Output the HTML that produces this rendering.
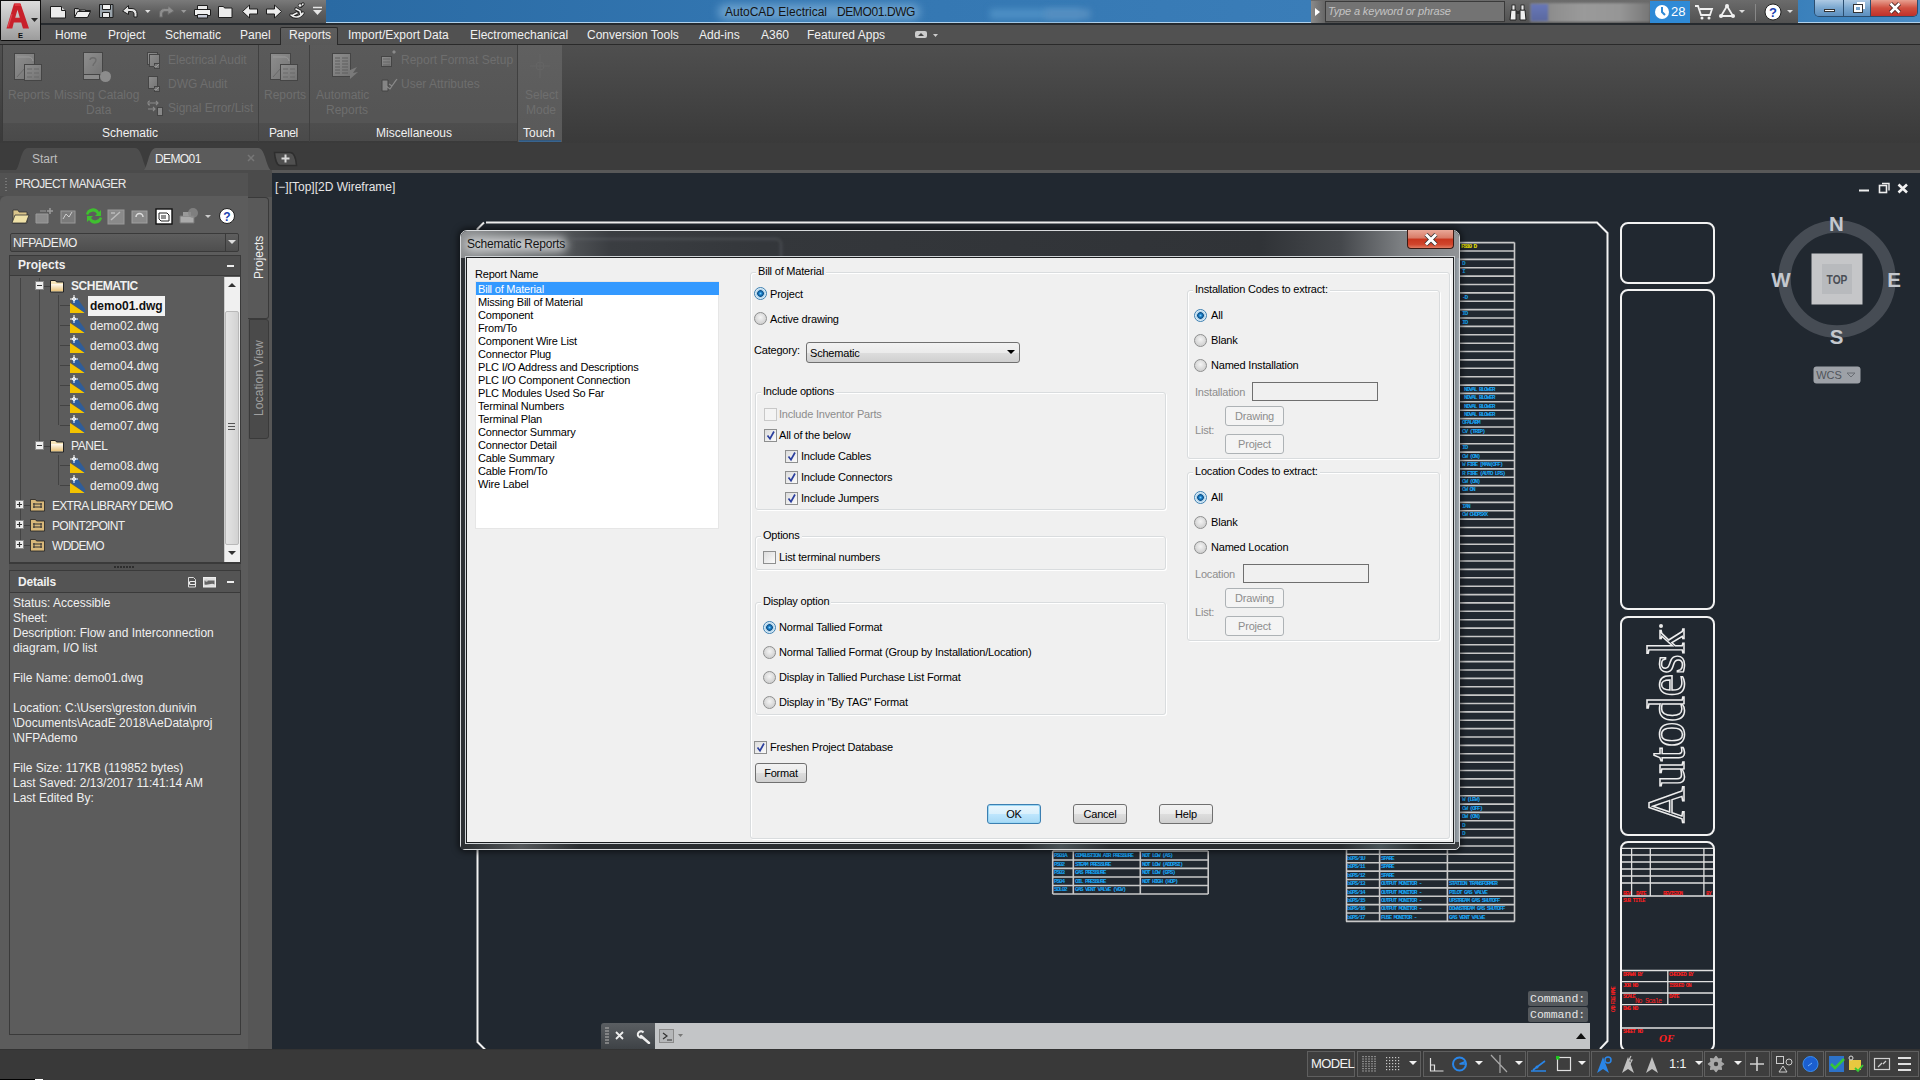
<!DOCTYPE html>
<html><head><meta charset="utf-8">
<style>
*{margin:0;padding:0;box-sizing:border-box}
html,body{width:1920px;height:1080px;overflow:hidden;background:#212830;font-family:"Liberation Sans",sans-serif}
.a{position:absolute}
.t{position:absolute;white-space:nowrap;line-height:1}
/* title */
#qat{left:0;top:0;width:326px;height:24px;background:linear-gradient(#7a7a7a,#5e5e5e 50%,#4e4e4e)}
#blue{left:326px;top:0;width:985px;height:23px;background:linear-gradient(90deg,#2a6aa3,#3275b0 40%,#3a7db8);border-bottom:1px solid #b0d0ea}
#srch{left:1311px;top:0;width:487px;height:24px;background:linear-gradient(#6b6b6b,#505050)}
#blue2{left:1798px;top:0;width:122px;height:23px;background:linear-gradient(90deg,#3a80bb,#4a8cc5);border-bottom:1px solid #b0d0ea}
#tabs{left:0;top:23px;width:1920px;height:22px;background:#515151;border-top:2px solid #262a2e;border-bottom:1px solid #2a2a2a}
#ribbon{left:0;top:45px;width:1920px;height:99px;background:linear-gradient(#4f4f4f,#3a3a3a);border-bottom:1px solid #747474}
#ftabs{left:0;top:143px;width:1920px;height:29px;background:#3c3c3c}
#leftbg{left:0;top:170px;width:272px;height:879px;background:#4b4b4b}
#status{left:0;top:1050px;width:1920px;height:30px;background:#393939}

.gb{position:absolute;border:1px solid #d9dcde;border-radius:3px;box-shadow:inset 1px 1px 0 #fff,1px 1px 0 #fff}
.gl{position:absolute;white-space:nowrap;line-height:1;background:#f0f0f0;padding:0 2px}
.rb{position:absolute;width:13px;height:13px;border-radius:50%;border:1px solid #8e8f8f;background:radial-gradient(circle at 50% 40%,#f4f4f4,#d2d2d2 70%,#e8e8e8)}
.rb.on{border-color:#3c7fb1;background:radial-gradient(circle at 50% 50%,#7fd0ff 0,#1a7fc8 1.5px,#0e4f86 3px,#9fc8e4 3.6px,#dcecf6 5px,#f2f8fc 6px)}
.cb{position:absolute;width:13px;height:13px;border:1px solid #8e8f8f;background:linear-gradient(135deg,#dcdcdc,#fbfbfb)}
.cb.dis{border-color:#c8c8c8;background:#f4f4f4}

.btn{position:absolute;border:1px solid #707070;border-radius:3px;background:linear-gradient(#f2f2f2,#ebebeb 50%,#dddddd 51%,#cfcfcf);text-align:center;line-height:18px;white-space:nowrap}
.btn.def{border-color:#3c7fb1;background:linear-gradient(#eaf6fd,#d9f0fc 50%,#bee6fd 51%,#a7d9f5);box-shadow:inset 0 0 0 1px #9ad7f5}
.btn.dis{border-color:#adb2b5;background:#f4f4f4;color:#8d8d8d}

.sbx{position:absolute;top:1051px;height:26px;border:1px solid #5f5f5f;background:#3e3e3e}
</style></head><body>
<!-- ===== TITLE BAR ===== -->
<div id="qat" class="a"></div>
<div id="blue" class="a"></div>
<div id="srch" class="a"></div>
<div id="blue2" class="a"></div>
<!-- app button -->
<div class="a" style="left:0;top:0;width:41px;height:41px;background:#0e0e0e;border-radius:0 0 2px 2px;z-index:5">
 <div class="a" style="left:1px;top:1px;width:39px;height:39px;background:linear-gradient(#dcdcdc,#bdbdbd 50%,#9c9c9c)"></div>
 <svg class="a" style="left:0;top:0" width="41" height="41" viewBox="0 0 41 41"><path fill-rule="evenodd" d="M6.5 28.5L14 3.5H20.5L29 28.5H23L21.2 22.5H13.8L12.3 28.5Z M15.2 17.8H19.8L17.5 9.8Z" fill="#c8202a"/><path d="M14.5 3.5H20L21 6H15z" fill="#e03840"/><path d="M8 27l4-13" stroke="#e8606a" stroke-width="1.2" opacity="0.6"/>
 <path d="M31 18h7l-3.5 4z" fill="#2a2a2a"/>
 <text x="20.5" y="37.5" font-size="7.5" font-weight="bold" text-anchor="middle" fill="#0a0a0a" font-family="Liberation Sans">E</text></svg>
</div>
<!-- QAT icons -->
<svg class="a" style="left:42px;top:0" width="288" height="24" viewBox="42 0 288 24">
 <g stroke="#1e1e1e" stroke-width="1" stroke-linejoin="round">
  <path d="M50.5 6.5h11l4 4v7.5h-15z" fill="#ececec"/><path d="M61.5 6.5v4h4" fill="#cfcfcf"/>
  <path d="M74.5 8.5v9h13l3-7h-11.5" fill="#d8d8d8"/><path d="M74.5 8.5h4l1 1.5h6v2" fill="#e6e6e6"/><path d="M77.5 11.5h13l-3 6h-13z" fill="#eeeeee"/>
  <path d="M99.5 4.5h13.5v13h-13.5z" fill="#9aa4ac"/><rect x="102.5" y="4.5" width="8" height="5" fill="#f2f2f2"/><rect x="102.5" y="12.5" width="7" height="5" fill="#eaeaea"/>
  <path d="M122.5 11l6-5.5v3h3.5c3 0 5 2 5 5v3.5h-3v-3c0-1.5-1-2.5-2.5-2.5h-3v3z" fill="#e4e4e4"/>
  <path d="M174 11l-6-5.5v3h-3.5c-3 0-5 2-5 5v3.5h3v-3c0-1.5 1-2.5 2.5-2.5h3v3z" fill="#8e8e8e" stroke="#6a6a6a"/>
  <path d="M197.5 5.5h10v4h-10z" fill="#e8e8e8"/><path d="M194.5 9.5h16v6h-16z" fill="#f0f0f0"/><path d="M197.5 14.5h10v3.5h-10z" fill="#c8ccd8"/>
  <path d="M218.5 6.5h5l1 1.5h7.5v9.5h-13.5z" fill="#ececec"/>
  <path d="M242.5 11.5l7-6.5v4h8v5h-8v4z" fill="#eeeeee"/>
  <path d="M281.5 11.5l-7-6.5v4h-8v5h8v4z" fill="#eeeeee"/>
 </g>
 <path d="M145 10h5.5l-2.75 3z" fill="#e0e0e0"/>
 <path d="M181 10h5.5l-2.75 3z" fill="#9a9a9a"/>
 <path d="M291 15c3 3 9 3 12-2M296 9l4 2 1 4M297 13l-4 2M301 6l2-2" stroke="#1e1e1e" stroke-width="3.2" fill="none" stroke-linecap="round"/>
 <path d="M291 15c3 3 9 3 12-2M296 9l4 2 1 4M297 13l-4 2M301 6l2-2" stroke="#f0f0f0" stroke-width="1.6" fill="none" stroke-linecap="round"/>
 <circle cx="300" cy="5.5" r="1.8" fill="#f0f0f0" stroke="#1e1e1e" stroke-width="0.8"/>
 <path d="M313 7.5h9" stroke="#e6e6e6" stroke-width="1.5"/><path d="M313 10h9l-4.5 5z" fill="#e6e6e6"/>
</svg>
<!-- title text -->
<div class="a" style="left:718px;top:4px;width:202px;height:16px;background:rgba(150,195,230,0.55);border-radius:8px;filter:blur(4px)"></div><div class="t" style="left:725px;top:6px;font-size:12px;color:#141414">AutoCAD Electrical</div><div class="t" style="left:837px;top:6px;font-size:12px;color:#141414;letter-spacing:-0.4px">DEMO01.DWG</div>
<div class="a" style="left:990px;top:9px;width:90px;height:10px;background:#4d8fc4;filter:blur(3px)"></div>
<div class="a" style="left:1045px;top:9px;width:45px;height:10px;background:#558ec0;filter:blur(3px)"></div>
<!-- search -->
<div class="a" style="left:1311px;top:1px;width:14px;height:22px;background:linear-gradient(90deg,#8a8a8a,#666)"></div>
<svg class="a" style="left:1315px;top:8px" width="6" height="8"><path d="M0 0L5 4L0 8Z" fill="#fff"/></svg>
<div class="a" style="left:1325px;top:1px;width:180px;height:21px;background:#737373;border:1px solid #3a3a3a"></div>
<div class="t" style="left:1328px;top:6px;font-size:11px;font-style:italic;color:#c4c4c4;letter-spacing:-0.15px">Type a keyword or phrase</div>
<svg class="a" style="left:1509px;top:4px" width="18" height="17" viewBox="0 0 18 17"><path d="M2 6h5v10H1z M11 6h5l1 10h-6z" fill="#f0f0f0" stroke="#222" stroke-width="1"/><rect x="3" y="1" width="3" height="5" fill="#eee" stroke="#222" stroke-width="0.8"/><rect x="12" y="1" width="3" height="5" fill="#eee" stroke="#222" stroke-width="0.8"/><rect x="7" y="7" width="4" height="3" fill="#333"/></svg>
<div class="a" style="left:1530px;top:3px;width:120px;height:19px;background:linear-gradient(90deg,#7b7b80,#8f8f8f 20%,#9a9a9a 45%,#969696 75%,#777 100%);filter:blur(1px)"></div>
<div class="a" style="left:1531px;top:4px;width:17px;height:17px;background:linear-gradient(#6878b8,#5a68a0);filter:blur(1.2px)"></div>
<div class="a" style="left:1650px;top:1px;width:40px;height:22px;background:#2f8ad6"></div>
<svg class="a" style="left:1654px;top:4px" width="16" height="16" viewBox="0 0 16 16"><circle cx="8" cy="8" r="7" fill="#fff"/><path d="M8 3v5l3 3" stroke="#2f8ad6" stroke-width="2" fill="none"/></svg>
<div class="t" style="left:1671px;top:5px;font-size:13px;color:#fff">28</div>
<svg class="a" style="left:1694px;top:4px" width="20" height="16" viewBox="0 0 20 16"><path d="M1 2h3l3 9h9l2-6H6" stroke="#f0f0f0" stroke-width="1.8" fill="none"/><circle cx="8" cy="14" r="1.5" fill="#f0f0f0"/><circle cx="15" cy="14" r="1.5" fill="#f0f0f0"/></svg>
<svg class="a" style="left:1718px;top:3px" width="18" height="16" viewBox="0 0 18 16"><path d="M9 3L3 13h12z" stroke="#f0f0f0" stroke-width="1.8" fill="none"/><circle cx="9" cy="3" r="2" fill="#f0f0f0"/><circle cx="3" cy="13" r="2" fill="#f0f0f0"/><circle cx="15" cy="13" r="2" fill="#f0f0f0"/></svg>
<svg class="a" style="left:1739px;top:10px" width="6" height="4"><path d="M0 0H6L3 3Z" fill="#ddd"/></svg>
<div class="a" style="left:1755px;top:4px;width:1px;height:17px;background:#888"></div>
<svg class="a" style="left:1764px;top:3px" width="18" height="18" viewBox="0 0 18 18"><circle cx="9" cy="9" r="8" fill="#fff" stroke="#222" stroke-width="1"/><text x="9" y="14" font-size="13" font-weight="bold" text-anchor="middle" fill="#1b3fb0" font-family="Liberation Sans">?</text></svg>
<svg class="a" style="left:1787px;top:10px" width="6" height="4"><path d="M0 0H6L3 3Z" fill="#ddd"/></svg>
<!-- window buttons -->
<div class="a" style="left:1814px;top:0;width:104px;height:17px;border:1px solid #2b4e70;border-top:none;border-radius:0 0 5px 5px;overflow:hidden">
 <div class="a" style="left:0;top:0;width:28px;height:16px;background:linear-gradient(#aecae4,#7aa7cf 50%,#5c8fbf)"></div>
 <div class="a" style="left:28px;top:0;width:1px;height:16px;background:#2b4e70"></div>
 <div class="a" style="left:29px;top:0;width:26px;height:16px;background:linear-gradient(#aecae4,#7aa7cf 50%,#5c8fbf)"></div>
 <div class="a" style="left:55px;top:0;width:1px;height:16px;background:#2b4e70"></div>
 <div class="a" style="left:56px;top:0;width:48px;height:16px;background:linear-gradient(#e8a090,#d05040 50%,#c0302a)"></div>
 <div class="a" style="left:9px;top:9px;width:11px;height:3px;background:#fff;border:1px solid #333"></div>
 <div class="a" style="left:39px;top:5px;width:8px;height:7px;border:2px solid #fff;outline:1px solid #333"></div>
 <div class="a" style="left:42px;top:2px;width:8px;height:7px;border:2px solid #fff;border-left:none;border-bottom:none"></div>
 <svg class="a" style="left:73px;top:2px" width="14" height="12" viewBox="0 0 14 12"><path d="M2.5 1.5L11.5 10.5M11.5 1.5L2.5 10.5" stroke="#3a1a1a" stroke-width="4.2"/><path d="M2.5 1.5L11.5 10.5M11.5 1.5L2.5 10.5" stroke="#fff" stroke-width="2.6"/></svg>
</div>

<!-- ===== RIBBON TABS ===== -->
<div id="tabs" class="a"></div>
<div class="a" style="left:280px;top:27px;width:58px;height:19px;background:linear-gradient(#5e5e5e,#585858);border:1px solid #2a2a2a;border-bottom:none;border-radius:2px 2px 0 0"></div>
<div id="tabtxt" style="color:#f0f0f0;font-size:12px">
 <div class="t" style="left:55px;top:29px">Home</div>
 <div class="t" style="left:108px;top:29px">Project</div>
 <div class="t" style="left:165px;top:29px">Schematic</div>
 <div class="t" style="left:240px;top:29px">Panel</div>
 <div class="t" style="left:289px;top:29px">Reports</div>
 <div class="t" style="left:348px;top:29px">Import/Export Data</div>
 <div class="t" style="left:470px;top:29px">Electromechanical</div>
 <div class="t" style="left:587px;top:29px">Conversion Tools</div>
 <div class="t" style="left:699px;top:29px">Add-ins</div>
 <div class="t" style="left:761px;top:29px">A360</div>
 <div class="t" style="left:807px;top:29px">Featured Apps</div>
</div>
<svg class="a" style="left:914px;top:30px" width="26" height="10" viewBox="0 0 26 10"><rect x="1" y="1" width="12" height="7" rx="2" fill="#ccc"/><path d="M4 6l3-3 3 3z" fill="#444"/><path d="M19 4h5l-2.5 3z" fill="#ccc"/></svg>

<!-- ===== RIBBON ===== -->
<div id="ribbon" class="a"></div>
<div class="a" style="left:2px;top:45px;width:560px;height:97px;background:linear-gradient(#5a5a5a,#555 70%);border:1px solid #3a3a3a;border-top:none"></div>
<div class="a" style="left:3px;top:123px;width:558px;height:18px;background:linear-gradient(#4e4e4e,#4a4a4a)"></div>
<div class="a" style="left:258px;top:45px;width:1px;height:97px;background:#404040"></div>
<div class="a" style="left:309px;top:45px;width:1px;height:97px;background:#404040"></div>
<div class="a" style="left:517px;top:45px;width:1px;height:97px;background:#404040"></div>
<div class="a" style="left:518px;top:45px;width:44px;height:97px;background:linear-gradient(#606060,#595959)"></div>
<div class="a" style="left:519px;top:140px;width:42px;height:2px;background:linear-gradient(#2f5375,#3d6a96)"></div>
<div style="color:#6e6e6e;font-size:12px">
 <div class="t" style="left:8px;top:89px">Reports</div>
 <div class="t" style="left:54px;top:89px">Missing Catalog</div>
 <div class="t" style="left:86px;top:104px">Data</div>
 <div class="t" style="left:168px;top:54px">Electrical Audit</div>
 <div class="t" style="left:168px;top:78px">DWG Audit</div>
 <div class="t" style="left:168px;top:102px">Signal Error/List</div>
 <div class="t" style="left:264px;top:89px">Reports</div>
 <div class="t" style="left:316px;top:89px">Automatic</div>
 <div class="t" style="left:326px;top:104px">Reports</div>
 <div class="t" style="left:401px;top:54px">Report Format Setup</div>
 <div class="t" style="left:401px;top:78px">User Attributes</div>
 <div class="t" style="left:525px;top:89px">Select</div>
 <div class="t" style="left:526px;top:104px">Mode</div>
</div>
<div style="color:#f0f0f0;font-size:12px">
 <div class="t" style="left:102px;top:127px">Schematic</div>
 <div class="t" style="left:269px;top:127px;letter-spacing:-0.4px">Panel</div>
 <div class="t" style="left:376px;top:127px">Miscellaneous</div>
 <div class="t" style="left:523px;top:127px">Touch</div>
</div>
<svg class="a" style="left:0;top:0" width="562" height="125" viewBox="0 0 562 125">
 <defs><linearGradient id="ig" x1="0" y1="0" x2="1" y2="1"><stop offset="0" stop-color="#8e8e8e"/><stop offset="1" stop-color="#747474"/></linearGradient></defs>
 <g stroke="#454545" stroke-width="1">
  <g id="rep"><rect x="14.5" y="53.5" width="20" height="26" fill="url(#ig)"/><path d="M17 57h12c2 0 4 2 4 4" fill="none" stroke="#9a9a9a"/><path d="M17 77l8-9" stroke="#6a6a6a"/>
  <rect x="24.5" y="64.5" width="17" height="16" fill="url(#ig)"/><path d="M27 69h5M34 69h5M27 73h5M34 73h5M27 77h5M34 77h5" stroke="#6a6a6a"/></g>
  <use href="#rep" x="256"/>
  <rect x="83.5" y="52.5" width="19" height="22" fill="url(#ig)"/><rect x="83.5" y="74.5" width="16" height="5" fill="#8a8a8a"/><circle cx="105.5" cy="76.5" r="5.5" fill="#8c8c8c" stroke="none"/>
  <path d="M90 60c0-3 6-3 6 0s-3 3-3 6" fill="none" stroke="#6c6c6c" stroke-width="1.3"/>
  <rect x="147.5" y="52.5" width="10" height="12" fill="url(#ig)"/><rect x="149.5" y="54.5" width="10" height="12" fill="url(#ig)"/><rect x="154.5" y="63.5" width="5" height="5" fill="#777"/>
  <rect x="148.5" y="76.5" width="9" height="12" fill="url(#ig)"/><rect x="154.5" y="86.5" width="5" height="5" fill="#777"/>
  <rect x="157.5" y="107.5" width="5" height="8" fill="#888"/>
  <rect x="332.5" y="53.5" width="18" height="23" fill="url(#ig)"/><path d="M335 58h5M342 58h6M335 61h5M342 61h6M335 64h5M342 64h6M335 67h5M342 67h6M335 70h5M342 70h6M335 73h5M342 73h6" stroke="#5e5e5e"/>
  <rect x="381.5" y="56.5" width="10" height="10" fill="url(#ig)"/><path d="M383 59h7M383 62h7M383 65h7" stroke="#666"/>
  <path d="M382 80h6v11h-6z" fill="#858585"/>
 </g>
 <path d="M350 70l7-3-4 6 5-1-8 7z" fill="#7a7a7a"/>
 <path d="M392 52l2 2 2-2-2-2z" fill="#8a8a8a"/>
 <path d="M386 86l4 3 6-9M389 84l3 2 5-7" stroke="#8a8a8a" stroke-width="1.2" fill="none"/>
 <path d="M154 66l2 1 3-3M154 89l2 1 3-3" stroke="#9a9a9a" stroke-width="1" fill="none"/>
 <path d="M149 103h9m-2-2l2 2-2 2M150 101a2 2 0 0 0 0 4M148 109h7m-2-2l2 2-2 2" stroke="#8a8a8a" stroke-width="1.1" fill="none"/>
 <g stroke="#646464" stroke-width="1" fill="none"><path d="M540 54v24M530 66h20"/><circle cx="540" cy="66" r="4"/></g>
</svg>

<!-- ===== FILE TABS ===== -->
<div id="ftabs" class="a"></div>
<svg class="a" style="left:0;top:143px" width="320" height="29" viewBox="0 0 320 29">
 <path d="M14 28 C20 28 20 5 28 5 H135 C143 5 143 28 150 28 Z" fill="#4d4d4d"/>
 <path d="M142 28 C148 28 148 5 156 5 H258 C266 5 266 28 273 28 Z" fill="#5b5b5b"/>
 <path d="M274.5 9.5 H290 C294 9.5 296 16 296.5 22.5 H280 C277 22.5 275 16 274.5 9.5Z" fill="#505050" stroke="#2e2e2e" stroke-width="1.5"/>
 <path d="M285.5 11.5v8M281.5 15.5h8" stroke="#d8d8d8" stroke-width="2"/>
 <path d="M248 12l6 6M254 12l-6 6" stroke="#777" stroke-width="1.5"/>
</svg>
<div class="t" style="left:32px;top:153px;font-size:12px;color:#bdbdbd">Start</div>
<div class="t" style="left:155px;top:153px;font-size:12px;color:#f0f0f0;letter-spacing:-0.6px">DEMO01</div>
<div class="a" style="left:0;top:170px;width:1920px;height:3px;background:#585858"></div>

<!-- ===== LEFT PANEL ===== -->
<div id="leftbg" class="a"></div>
<div class="a" style="left:0;top:173px;width:248px;height:23px;background:#525252"></div>
<div class="a" style="left:5px;top:178px;width:2px;height:14px;background:repeating-linear-gradient(#777 0 1px,transparent 1px 3px)"></div>
<div class="t" style="left:15px;top:178px;font-size:12px;color:#eaeaea;letter-spacing:-0.6px">PROJECT MANAGER</div>
<div class="a" style="left:0;top:196px;width:248px;height:853px;background:#5c5c5c;border-radius:6px 0 0 0"></div>
<!-- toolbar -->
<svg class="a" style="left:10px;top:205px" width="230" height="22" viewBox="0 0 230 22">
 <path d="M3 5h5l1 2h8v11H3z" fill="#d9c48a" stroke="#333" stroke-width="0.8"/><path d="M5 10h14l-3 8H2z" fill="#f0e2a8" stroke="#333" stroke-width="0.8"/>
 <path d="M26 9h12v9H26z M30 6h6" fill="#8b8b8b" stroke="#9a9a9a" stroke-width="1"/><path d="M40 3v6M37 6h6" stroke="#9a9a9a" stroke-width="1.5"/>
 <rect x="51" y="6" width="14" height="12" fill="#7a7a7a" stroke="#999" stroke-width="1"/><path d="M53 14l3-5 3 3 3-5" stroke="#ccc" fill="none"/>
 <path d="M76 9a7 7 0 0 1 13-2l2-2v6h-6l2-2a5 5 0 0 0-9 1z M92 13a7 7 0 0 1-13 2l-2 2v-6h6l-2 2a5 5 0 0 0 9-1z" fill="#3fbf2f"/>
 <rect x="98" y="5" width="16" height="14" fill="#8a8a8a" stroke="#9a9a9a"/><path d="M101 15l9-8M101 8h4" stroke="#bbb" stroke-width="1.5"/>
 <rect x="122" y="6" width="15" height="12" fill="#8a8a8a" stroke="#a0a0a0"/><path d="M126 12a3.5 3.5 0 0 1 7 0" stroke="#ddd" fill="none" stroke-width="1.5"/>
 <rect x="146" y="4" width="16" height="15" fill="#fff" stroke="#111" stroke-width="1.4"/><path d="M149 8h8l2 2v6h-8l-2-2z" fill="none" stroke="#222"/><path d="M151 11h5M151 13h5" stroke="#222"/>
 <path d="M170 11h14v7h-14z" fill="#aaa" stroke="#777"/><rect x="173" y="7" width="8" height="4" fill="#999"/><circle cx="183" cy="8" r="5" fill="#888" opacity="0.8"/>
 <path d="M195 10h6l-3 3z" fill="#ccc"/>
 <circle cx="217" cy="11" r="7.5" fill="#fff" stroke="#222" stroke-width="1"/><text x="217" y="16" font-size="12" font-weight="bold" text-anchor="middle" fill="#1b3fb0" font-family="Liberation Sans">?</text>
</svg>
<!-- combo -->
<div class="a" style="left:10px;top:233px;width:229px;height:19px;background:linear-gradient(#5e5e5e,#4e4e4e);border:1px solid #3a3a3a;border-radius:2px"></div>
<div class="a" style="left:225px;top:234px;width:1px;height:17px;background:#3a3a3a"></div>
<svg class="a" style="left:228px;top:240px" width="8" height="5"><path d="M0 0H8L4 4Z" fill="#ddd"/></svg>
<div class="t" style="left:13px;top:237px;font-size:12px;color:#efefef;letter-spacing:-0.4px">NFPADEMO</div>
<!-- Projects header -->
<div class="a" style="left:9px;top:255px;width:232px;height:21px;background:#4e4e4e;border:1px solid #3a3a3a"></div>
<div class="t" style="left:18px;top:259px;font-size:12px;font-weight:bold;color:#f0f0f0">Projects</div>
<div class="a" style="left:227px;top:265px;width:7px;height:2px;background:#eee"></div>
<!-- tree -->
<div class="a" style="left:9px;top:276px;width:232px;height:288px;border-left:1px solid #3a3a3a;border-right:1px solid #3a3a3a;border-bottom:2px solid #3a3a3a"></div>
<svg class="a" style="left:9px;top:276px" width="215" height="286" viewBox="9 276 215 286">
 <g stroke="#2a2a2a" stroke-width="1" stroke-dasharray="1 1" fill="none" transform="translate(0.5 0.5)">
  <path d="M20 278V545M39 278V445M58 295V425M58 455V485M44 286h6M44 446h6M60 305h10M60 325h10M60 345h10M60 365h10M60 385h10M60 405h10M60 425h10M60 465h10M60 485h10M24 505h6M24 525h6M24 545h6"/>
 </g>
 <g fill="#eee" stroke="#888" stroke-width="1"><rect x="35.5" y="281.5" width="8" height="8"/><rect x="35.5" y="441.5" width="8" height="8"/><rect x="15.5" y="500.5" width="8" height="8"/><rect x="15.5" y="520.5" width="8" height="8"/><rect x="15.5" y="540.5" width="8" height="8"/></g>
 <g stroke="#333" stroke-width="1.2"><path d="M37 285.5h5M37 445.5h5M17 504.5h5M17 524.5h5M17 544.5h5M19.5 502v5M19.5 522v5M19.5 542v5"/></g>
 <g id="fold"><path d="M50.5 280.5h5l1 1.5h7v10h-13z" fill="#f6e4b8" stroke="#222" stroke-width="1"/><path d="M51 284h12v7H51z" fill="url(#fg)"/></g>
 <use href="#fold" y="160"/>
 <defs><linearGradient id="fg" x1="0" y1="0" x2="0" y2="1"><stop offset="0" stop-color="#fffaf0"/><stop offset="1" stop-color="#e8c27a"/></linearGradient>
 <g id="dwg"><path d="M70 313 L70 303 L85 313Z" fill="#f2c200"/><path d="M73 299 L77 298 L85 309 L85 313 L72 303Z" fill="#2f5d9a"/><path d="M70 299h8M74 295v8" stroke="#fff" stroke-width="1"/><circle cx="74" cy="299" r="1.5" fill="none" stroke="#fff"/></g>
 <g id="pfold"><path d="M30.5 499.5h5l1 1.5h8v10h-14z" fill="#d9b87a" stroke="#222" stroke-width="0.8"/><path d="M33 504h9M34 503v5M41 503v5M33 507h9" stroke="#333" stroke-width="1"/></g>
 </defs>
 <use href="#dwg"/><use href="#dwg" y="20"/><use href="#dwg" y="40"/><use href="#dwg" y="60"/><use href="#dwg" y="80"/><use href="#dwg" y="100"/><use href="#dwg" y="120"/><use href="#dwg" y="160"/><use href="#dwg" y="180"/>
 <use href="#pfold"/><use href="#pfold" y="20"/><use href="#pfold" y="40"/>
</svg>
<div class="a" style="left:88px;top:296px;width:77px;height:20px;background:#f2f2f2"></div>
<div style="font-size:12px;color:#f0f0f0">
 <div class="t" style="left:71px;top:280px;font-weight:bold;letter-spacing:-0.4px">SCHEMATIC</div>
 <div class="t" style="left:90px;top:300px;font-weight:bold;color:#111">demo01.dwg</div>
 <div class="t" style="left:90px;top:320px">demo02.dwg</div>
 <div class="t" style="left:90px;top:340px">demo03.dwg</div>
 <div class="t" style="left:90px;top:360px">demo04.dwg</div>
 <div class="t" style="left:90px;top:380px">demo05.dwg</div>
 <div class="t" style="left:90px;top:400px">demo06.dwg</div>
 <div class="t" style="left:90px;top:420px">demo07.dwg</div>
 <div class="t" style="left:71px;top:440px;letter-spacing:-0.4px">PANEL</div>
 <div class="t" style="left:90px;top:460px">demo08.dwg</div>
 <div class="t" style="left:90px;top:480px">demo09.dwg</div>
 <div class="t" style="left:52px;top:500px;letter-spacing:-0.7px">EXTRA LIBRARY DEMO</div>
 <div class="t" style="left:52px;top:520px;letter-spacing:-0.7px">POINT2POINT</div>
 <div class="t" style="left:52px;top:540px;letter-spacing:-0.7px">WDDEMO</div>
</div>
<!-- scrollbar -->
<div class="a" style="left:224px;top:277px;width:16px;height:285px;background:#f0f0f0;border-left:1px solid #ccc"></div>
<div class="a" style="left:225px;top:311px;width:14px;height:234px;background:linear-gradient(90deg,#e4e4e4,#d2d2d2);border:1px solid #b8b8b8;border-radius:2px"></div>
<svg class="a" style="left:227px;top:282px" width="10" height="6"><path d="M1 5L5 1L9 5Z" fill="#333"/></svg>
<svg class="a" style="left:227px;top:550px" width="10" height="6"><path d="M1 1L5 5L9 1Z" fill="#333"/></svg>
<div class="a" style="left:228px;top:423px;width:7px;height:7px;background:repeating-linear-gradient(#555 0 1px,transparent 1px 3px)"></div>
<div class="a" style="left:9px;top:564px;width:232px;height:6px;background:#505050"></div><div class="a" style="left:114px;top:566px;width:20px;height:2px;background:repeating-linear-gradient(90deg,#2e2e2e 0 2px,transparent 2px 3px)"></div>
<!-- Details -->
<div class="a" style="left:9px;top:570px;width:232px;height:23px;background:#545454;border:1px solid #3a3a3a"></div>
<div class="t" style="left:18px;top:576px;font-size:12px;font-weight:bold;color:#f0f0f0;letter-spacing:-0.2px">Details</div>
<svg class="a" style="left:186px;top:575px" width="32" height="14" viewBox="0 0 32 14"><path d="M2.5 2.5h5l2 2v7.5h-7z" fill="none" stroke="#ddd"/><rect x="3.5" y="6.5" width="6" height="3" rx="1" fill="#555" stroke="#f0f0f0" stroke-width="1.2"/><rect x="17.5" y="2.5" width="12" height="9.5" fill="#e0e0e0" stroke="#eee"/><path d="M18.5 5.5h10v4c-3-2-6 1-10 0z" fill="#666"/><circle cx="20.5" cy="5.5" r="1.3" fill="#ccc"/></svg>
<div class="a" style="left:227px;top:581px;width:7px;height:2px;background:#eee"></div>
<div class="a" style="left:9px;top:592px;width:232px;height:443px;border:1px solid #3a3a3a;border-top:none"></div>
<div style="font-size:12px;color:#f0f0f0;line-height:15px" class="a" id="det">
 <div class="t" style="left:13px;top:596px;line-height:15px">Status: Accessible<br>Sheet:<br>Description: Flow and Interconnection<br>diagram, I/O list<br><br>File Name: demo01.dwg<br><br>Location: C:\Users\greston.dunivin<br>\Documents\AcadE 2018\AeData\proj<br>\NFPAdemo<br><br>File Size: 117KB (119852 bytes)<br>Last Saved: 2/13/2017 11:41:14 AM<br>Last Edited By:</div>
</div>
<!-- vertical tabs -->
<div class="a" style="left:248px;top:197px;width:24px;height:852px;background:#565656"></div>

<div class="a" style="left:248px;top:197px;width:21px;height:122px;background:#595959;border:1px solid #3a3a3a;border-left:none;border-radius:0 4px 3px 0"></div>
<div class="t" style="left:253px;top:279px;font-size:12px;color:#efefef;transform:rotate(-90deg);transform-origin:0 0">Projects</div>
<div class="a" style="left:249px;top:319px;width:20px;height:120px;background:#4a4a4a;border:1px solid #3a3a3a;border-radius:0 3px 3px 0"></div>
<div class="t" style="left:253px;top:416px;font-size:12px;color:#a0a0a0;transform:rotate(-90deg);transform-origin:0 0;letter-spacing:0.1px">Location View</div>

<!-- ===== DRAWING ===== -->
<div class="t" style="left:275px;top:181px;font-size:12px;color:#e6e6e6">[&minus;][Top][2D Wireframe]</div>
<svg class="a" style="left:1855px;top:180px" width="60" height="16" viewBox="0 0 60 16"><path d="M4 10.5h10" stroke="#eee" stroke-width="2"/><rect x="24.5" y="5.5" width="7" height="7" fill="none" stroke="#eee" stroke-width="1.6"/><path d="M27 3.5h7v7" fill="none" stroke="#eee" stroke-width="1.4"/><path d="M43.5 4.5l8.5 8M52 4.5l-8.5 8" stroke="#f2f2f2" stroke-width="2.6"/></svg>
<svg class="a" style="left:272px;top:173px" width="1648" height="876" viewBox="272 173 1648 876">
<path d="M486 222.5H1597L1607.5 233V1041L1600 1049M485 1049.5L477.5 1042V229L484 222.5" fill="none" stroke="#f2f2f2" stroke-width="2"/>
<rect x="1621" y="223" width="93" height="60" rx="7" fill="none" stroke="#f2f2f2" stroke-width="2"/>
<rect x="1621" y="290" width="93" height="319" rx="7" fill="none" stroke="#f2f2f2" stroke-width="2"/>
<rect x="1621" y="617" width="93" height="218" rx="7" fill="none" stroke="#f2f2f2" stroke-width="2"/>
<rect x="1621" y="842" width="93" height="209" rx="7" fill="none" stroke="#f2f2f2" stroke-width="2"/>
<g stroke="#c8c8c8" stroke-width="1.6" fill="none">
<path d="M1460 242.6H1514.5"/>
<path d="M1460 251.0H1514.5"/>
<path d="M1460 259.4H1514.5"/>
<path d="M1460 267.7H1514.5"/>
<path d="M1460 276.1H1514.5"/>
<path d="M1460 284.5H1514.5"/>
<path d="M1460 292.9H1514.5"/>
<path d="M1460 301.3H1514.5"/>
<path d="M1460 309.6H1514.5"/>
<path d="M1460 318.0H1514.5"/>
<path d="M1460 326.4H1514.5"/>
<path d="M1460 334.8H1514.5"/>
<path d="M1460 343.2H1514.5"/>
<path d="M1460 351.5H1514.5"/>
<path d="M1460 359.9H1514.5"/>
<path d="M1460 368.3H1514.5"/>
<path d="M1460 376.7H1514.5"/>
<path d="M1460 385.1H1514.5"/>
<path d="M1460 393.4H1514.5"/>
<path d="M1460 401.8H1514.5"/>
<path d="M1460 410.2H1514.5"/>
<path d="M1460 418.6H1514.5"/>
<path d="M1460 427.0H1514.5"/>
<path d="M1460 435.3H1514.5"/>
<path d="M1460 443.7H1514.5"/>
<path d="M1460 452.1H1514.5"/>
<path d="M1460 460.5H1514.5"/>
<path d="M1460 468.9H1514.5"/>
<path d="M1460 477.2H1514.5"/>
<path d="M1460 485.6H1514.5"/>
<path d="M1460 494.0H1514.5"/>
<path d="M1460 502.4H1514.5"/>
<path d="M1460 510.8H1514.5"/>
<path d="M1460 519.1H1514.5"/>
<path d="M1460 527.5H1514.5"/>
<path d="M1460 535.9H1514.5"/>
<path d="M1460 544.3H1514.5"/>
<path d="M1460 552.7H1514.5"/>
<path d="M1460 561.0H1514.5"/>
<path d="M1460 569.4H1514.5"/>
<path d="M1460 577.8H1514.5"/>
<path d="M1460 586.2H1514.5"/>
<path d="M1460 594.6H1514.5"/>
<path d="M1460 602.9H1514.5"/>
<path d="M1460 611.3H1514.5"/>
<path d="M1460 619.7H1514.5"/>
<path d="M1460 628.1H1514.5"/>
<path d="M1460 636.5H1514.5"/>
<path d="M1460 644.8H1514.5"/>
<path d="M1460 653.2H1514.5"/>
<path d="M1460 661.6H1514.5"/>
<path d="M1460 670.0H1514.5"/>
<path d="M1460 678.4H1514.5"/>
<path d="M1460 686.7H1514.5"/>
<path d="M1460 695.1H1514.5"/>
<path d="M1460 703.5H1514.5"/>
<path d="M1460 711.9H1514.5"/>
<path d="M1460 720.3H1514.5"/>
<path d="M1460 728.6H1514.5"/>
<path d="M1460 737.0H1514.5"/>
<path d="M1460 745.4H1514.5"/>
<path d="M1460 753.8H1514.5"/>
<path d="M1460 762.2H1514.5"/>
<path d="M1460 770.5H1514.5"/>
<path d="M1460 778.9H1514.5"/>
<path d="M1460 787.3H1514.5"/>
<path d="M1460 795.7H1514.5"/>
<path d="M1460 804.1H1514.5"/>
<path d="M1460 812.4H1514.5"/>
<path d="M1460 820.8H1514.5"/>
<path d="M1460 829.2H1514.5"/>
<path d="M1346 837.6H1514.5"/>
<path d="M1346 846.0H1514.5"/>
<path d="M1346 854.3H1514.5"/>
<path d="M1346 862.7H1514.5"/>
<path d="M1346 871.1H1514.5"/>
<path d="M1346 879.5H1514.5"/>
<path d="M1346 887.9H1514.5"/>
<path d="M1346 896.2H1514.5"/>
<path d="M1346 904.6H1514.5"/>
<path d="M1346 913.0H1514.5"/>
<path d="M1346 921.4H1514.5"/>
<path d="M1514.5 242.6V921.4M1346.5 835V921.4M1379.6 835V921.4M1447.4 835V921.4"/>
<path d="M1052.7 851H1208.2"/>
<path d="M1052.7 860H1208.2"/>
<path d="M1052.7 868.4H1208.2"/>
<path d="M1052.7 877H1208.2"/>
<path d="M1052.7 885.5H1208.2"/>
<path d="M1052.7 894H1208.2"/>
<path d="M1052.7 851V894M1073.3 851V894M1140.3 851V894M1208.2 851V894"/>
</g>
<g stroke="#e0e0e0" stroke-width="1.3" fill="none">
<path d="M1622 848.3H1713"/>
<path d="M1622 855H1713"/>
<path d="M1622 862H1713"/>
<path d="M1622 869H1713"/>
<path d="M1622 876H1713"/>
<path d="M1622 883H1713"/>
<path d="M1622 896H1713"/>
<path d="M1631.6 848V896M1650.3 848V896M1703.9 848V896"/>
<path d="M1622 970.5H1713"/>
<path d="M1622 981.7H1713"/>
<path d="M1622 993H1713"/>
<path d="M1622 1004.7H1713"/>
<path d="M1622 1028H1713"/>
<path d="M1667.8 970.5V1004.7"/>
</g>
</svg>
<div class="t" style="left:1461px;top:244.3px;font-size:6.2px;font-weight:bold;color:#e8e000;font-family:Liberation Mono;letter-spacing:-1.2px">FS10 D</div>
<div class="t" style="left:1462px;top:261.06px;font-size:6.2px;font-weight:bold;color:#18a4f4;font-family:Liberation Mono;letter-spacing:-1.2px">D</div>
<div class="t" style="left:1462px;top:269.44px;font-size:6.2px;font-weight:bold;color:#18a4f4;font-family:Liberation Mono;letter-spacing:-1.2px">I</div>
<div class="t" style="left:1462px;top:294.58px;font-size:6.2px;font-weight:bold;color:#18a4f4;font-family:Liberation Mono;letter-spacing:-1.2px">-D</div>
<div class="t" style="left:1462px;top:311.34000000000003px;font-size:6.2px;font-weight:bold;color:#18a4f4;font-family:Liberation Mono;letter-spacing:-1.2px">IO</div>
<div class="t" style="left:1462px;top:319.72px;font-size:6.2px;font-weight:bold;color:#18a4f4;font-family:Liberation Mono;letter-spacing:-1.2px">IO</div>
<div class="t" style="left:1464px;top:386.76000000000005px;font-size:6.2px;font-weight:bold;color:#18a4f4;font-family:Liberation Mono;letter-spacing:-1.2px">NDVAL BLOWER</div>
<div class="t" style="left:1464px;top:395.14000000000004px;font-size:6.2px;font-weight:bold;color:#18a4f4;font-family:Liberation Mono;letter-spacing:-1.2px">NDVAL BLOWER</div>
<div class="t" style="left:1464px;top:403.52000000000004px;font-size:6.2px;font-weight:bold;color:#18a4f4;font-family:Liberation Mono;letter-spacing:-1.2px">NDVAL BLOWER</div>
<div class="t" style="left:1464px;top:411.90000000000003px;font-size:6.2px;font-weight:bold;color:#18a4f4;font-family:Liberation Mono;letter-spacing:-1.2px">NDVAL BLOWER</div>
<div class="t" style="left:1462px;top:420.28000000000003px;font-size:6.2px;font-weight:bold;color:#18a4f4;font-family:Liberation Mono;letter-spacing:-1.2px">OFALARM</div>
<div class="t" style="left:1462px;top:428.66px;font-size:6.2px;font-weight:bold;color:#18a4f4;font-family:Liberation Mono;letter-spacing:-1.2px">CV (TRIP)</div>
<div class="t" style="left:1462px;top:445.42px;font-size:6.2px;font-weight:bold;color:#18a4f4;font-family:Liberation Mono;letter-spacing:-1.2px">IO</div>
<div class="t" style="left:1462px;top:453.8px;font-size:6.2px;font-weight:bold;color:#18a4f4;font-family:Liberation Mono;letter-spacing:-1.2px">CW (ON)</div>
<div class="t" style="left:1462px;top:462.18px;font-size:6.2px;font-weight:bold;color:#18a4f4;font-family:Liberation Mono;letter-spacing:-1.2px">W FIRE [MAN(OFF)</div>
<div class="t" style="left:1462px;top:470.56px;font-size:6.2px;font-weight:bold;color:#18a4f4;font-family:Liberation Mono;letter-spacing:-1.2px">R FIRE (AUTO LPS)</div>
<div class="t" style="left:1462px;top:478.94px;font-size:6.2px;font-weight:bold;color:#18a4f4;font-family:Liberation Mono;letter-spacing:-1.2px">CW (ON)</div>
<div class="t" style="left:1462px;top:487.32px;font-size:6.2px;font-weight:bold;color:#18a4f4;font-family:Liberation Mono;letter-spacing:-1.2px">CW ON</div>
<div class="t" style="left:1462px;top:504.08000000000004px;font-size:6.2px;font-weight:bold;color:#18a4f4;font-family:Liberation Mono;letter-spacing:-1.2px">IAN</div>
<div class="t" style="left:1462px;top:512.46px;font-size:6.2px;font-weight:bold;color:#18a4f4;font-family:Liberation Mono;letter-spacing:-1.2px">CW CHOPSXX</div>
<div class="t" style="left:1462px;top:797.38px;font-size:6.2px;font-weight:bold;color:#18a4f4;font-family:Liberation Mono;letter-spacing:-1.2px">W (LEW)</div>
<div class="t" style="left:1462px;top:805.76px;font-size:6.2px;font-weight:bold;color:#18a4f4;font-family:Liberation Mono;letter-spacing:-1.2px">CW (OFF)</div>
<div class="t" style="left:1462px;top:814.14px;font-size:6.2px;font-weight:bold;color:#18a4f4;font-family:Liberation Mono;letter-spacing:-1.2px">DW (ON)</div>
<div class="t" style="left:1462px;top:822.52px;font-size:6.2px;font-weight:bold;color:#18a4f4;font-family:Liberation Mono;letter-spacing:-1.2px">D</div>
<div class="t" style="left:1462px;top:830.9px;font-size:6.2px;font-weight:bold;color:#18a4f4;font-family:Liberation Mono;letter-spacing:-1.2px">D</div>
<div class="t" style="left:1347px;top:856.04px;font-size:6.2px;font-weight:bold;color:#18a4f4;font-family:Liberation Mono;letter-spacing:-1.2px">b0PS/1U</div>
<div class="t" style="left:1381px;top:856.04px;font-size:6.2px;font-weight:bold;color:#18a4f4;font-family:Liberation Mono;letter-spacing:-1.2px">SPARE</div>
<div class="t" style="left:1449px;top:856.04px;font-size:6.2px;font-weight:bold;color:#18a4f4;font-family:Liberation Mono;letter-spacing:-1.2px"></div>
<div class="t" style="left:1347px;top:864.42px;font-size:6.2px;font-weight:bold;color:#18a4f4;font-family:Liberation Mono;letter-spacing:-1.2px">b0PS/11</div>
<div class="t" style="left:1381px;top:864.42px;font-size:6.2px;font-weight:bold;color:#18a4f4;font-family:Liberation Mono;letter-spacing:-1.2px">SPARE</div>
<div class="t" style="left:1449px;top:864.42px;font-size:6.2px;font-weight:bold;color:#18a4f4;font-family:Liberation Mono;letter-spacing:-1.2px"></div>
<div class="t" style="left:1347px;top:872.8000000000001px;font-size:6.2px;font-weight:bold;color:#18a4f4;font-family:Liberation Mono;letter-spacing:-1.2px">b0PS/12</div>
<div class="t" style="left:1381px;top:872.8000000000001px;font-size:6.2px;font-weight:bold;color:#18a4f4;font-family:Liberation Mono;letter-spacing:-1.2px">SPARE</div>
<div class="t" style="left:1449px;top:872.8000000000001px;font-size:6.2px;font-weight:bold;color:#18a4f4;font-family:Liberation Mono;letter-spacing:-1.2px"></div>
<div class="t" style="left:1347px;top:881.1800000000001px;font-size:6.2px;font-weight:bold;color:#18a4f4;font-family:Liberation Mono;letter-spacing:-1.2px">b0PS/13</div>
<div class="t" style="left:1381px;top:881.1800000000001px;font-size:6.2px;font-weight:bold;color:#18a4f4;font-family:Liberation Mono;letter-spacing:-1.2px">OUTPUT MONITOR -</div>
<div class="t" style="left:1449px;top:881.1800000000001px;font-size:6.2px;font-weight:bold;color:#18a4f4;font-family:Liberation Mono;letter-spacing:-1.2px">STATION TRANSFORMER</div>
<div class="t" style="left:1347px;top:889.5600000000001px;font-size:6.2px;font-weight:bold;color:#18a4f4;font-family:Liberation Mono;letter-spacing:-1.2px">b0PS/14</div>
<div class="t" style="left:1381px;top:889.5600000000001px;font-size:6.2px;font-weight:bold;color:#18a4f4;font-family:Liberation Mono;letter-spacing:-1.2px">OUTPUT MONITOR -</div>
<div class="t" style="left:1449px;top:889.5600000000001px;font-size:6.2px;font-weight:bold;color:#18a4f4;font-family:Liberation Mono;letter-spacing:-1.2px">PILOT GAS VALVE</div>
<div class="t" style="left:1347px;top:897.94px;font-size:6.2px;font-weight:bold;color:#18a4f4;font-family:Liberation Mono;letter-spacing:-1.2px">b0PS/15</div>
<div class="t" style="left:1381px;top:897.94px;font-size:6.2px;font-weight:bold;color:#18a4f4;font-family:Liberation Mono;letter-spacing:-1.2px">OUTPUT MONITOR -</div>
<div class="t" style="left:1449px;top:897.94px;font-size:6.2px;font-weight:bold;color:#18a4f4;font-family:Liberation Mono;letter-spacing:-1.2px">UPSTREAM GAS SHUTOFF</div>
<div class="t" style="left:1347px;top:906.32px;font-size:6.2px;font-weight:bold;color:#18a4f4;font-family:Liberation Mono;letter-spacing:-1.2px">b0PS/16</div>
<div class="t" style="left:1381px;top:906.32px;font-size:6.2px;font-weight:bold;color:#18a4f4;font-family:Liberation Mono;letter-spacing:-1.2px">OUTPUT MONITOR -</div>
<div class="t" style="left:1449px;top:906.32px;font-size:6.2px;font-weight:bold;color:#18a4f4;font-family:Liberation Mono;letter-spacing:-1.2px">DOWNSTREAM GAS SHUTOFF</div>
<div class="t" style="left:1347px;top:914.7px;font-size:6.2px;font-weight:bold;color:#18a4f4;font-family:Liberation Mono;letter-spacing:-1.2px">b0PS/17</div>
<div class="t" style="left:1381px;top:914.7px;font-size:6.2px;font-weight:bold;color:#18a4f4;font-family:Liberation Mono;letter-spacing:-1.2px">FUSE MONITOR -</div>
<div class="t" style="left:1449px;top:914.7px;font-size:6.2px;font-weight:bold;color:#18a4f4;font-family:Liberation Mono;letter-spacing:-1.2px">GAS VENT VALVE</div>
<div class="t" style="left:1054px;top:852.8px;font-size:6.2px;font-weight:bold;color:#18a4f4;font-family:Liberation Mono;letter-spacing:-1.2px">PS01A</div>
<div class="t" style="left:1075px;top:852.8px;font-size:6.2px;font-weight:bold;color:#18a4f4;font-family:Liberation Mono;letter-spacing:-1.2px">COMBUSTION AIR PRESSURE</div>
<div class="t" style="left:1142px;top:852.8px;font-size:6.2px;font-weight:bold;color:#18a4f4;font-family:Liberation Mono;letter-spacing:-1.2px">NOT LOW (AS)</div>
<div class="t" style="left:1054px;top:861.8px;font-size:6.2px;font-weight:bold;color:#18a4f4;font-family:Liberation Mono;letter-spacing:-1.2px">PS02</div>
<div class="t" style="left:1075px;top:861.8px;font-size:6.2px;font-weight:bold;color:#18a4f4;font-family:Liberation Mono;letter-spacing:-1.2px">STEAM PRESSURE</div>
<div class="t" style="left:1142px;top:861.8px;font-size:6.2px;font-weight:bold;color:#18a4f4;font-family:Liberation Mono;letter-spacing:-1.2px">NOT LOW (ADDPSI)</div>
<div class="t" style="left:1054px;top:870.1999999999999px;font-size:6.2px;font-weight:bold;color:#18a4f4;font-family:Liberation Mono;letter-spacing:-1.2px">PS03</div>
<div class="t" style="left:1075px;top:870.1999999999999px;font-size:6.2px;font-weight:bold;color:#18a4f4;font-family:Liberation Mono;letter-spacing:-1.2px">GAS PRESSURE</div>
<div class="t" style="left:1142px;top:870.1999999999999px;font-size:6.2px;font-weight:bold;color:#18a4f4;font-family:Liberation Mono;letter-spacing:-1.2px">NOT LOW (GPS)</div>
<div class="t" style="left:1054px;top:878.8px;font-size:6.2px;font-weight:bold;color:#18a4f4;font-family:Liberation Mono;letter-spacing:-1.2px">PS04</div>
<div class="t" style="left:1075px;top:878.8px;font-size:6.2px;font-weight:bold;color:#18a4f4;font-family:Liberation Mono;letter-spacing:-1.2px">OIL PRESSURE</div>
<div class="t" style="left:1142px;top:878.8px;font-size:6.2px;font-weight:bold;color:#18a4f4;font-family:Liberation Mono;letter-spacing:-1.2px">NOT HIGH (HOP)</div>
<div class="t" style="left:1054px;top:887.3px;font-size:6.2px;font-weight:bold;color:#18a4f4;font-family:Liberation Mono;letter-spacing:-1.2px">SOL02</div>
<div class="t" style="left:1075px;top:887.3px;font-size:6.2px;font-weight:bold;color:#18a4f4;font-family:Liberation Mono;letter-spacing:-1.2px">GAS VENT VALVE (VGV)</div>
<div class="t" style="left:1142px;top:887.3px;font-size:6.2px;font-weight:bold;color:#18a4f4;font-family:Liberation Mono;letter-spacing:-1.2px"></div>
<div class="t" style="left:1623px;top:891px;font-size:5.5px;font-weight:bold;color:#ff2020;font-family:Liberation Mono;letter-spacing:-0.9px;">REV</div>
<div class="t" style="left:1636px;top:891px;font-size:5.5px;font-weight:bold;color:#ff2020;font-family:Liberation Mono;letter-spacing:-0.9px;">DATE</div>
<div class="t" style="left:1663px;top:891px;font-size:5.5px;font-weight:bold;color:#ff2020;font-family:Liberation Mono;letter-spacing:-0.9px;">REVISION</div>
<div class="t" style="left:1706px;top:891px;font-size:5.5px;font-weight:bold;color:#ff2020;font-family:Liberation Mono;letter-spacing:-0.9px;">BY</div>
<div class="t" style="left:1623px;top:898px;font-size:5.5px;font-weight:bold;color:#ff2020;font-family:Liberation Mono;letter-spacing:-0.9px;">SUB TITLE</div>
<div class="t" style="left:1623px;top:972px;font-size:5.5px;font-weight:bold;color:#ff2020;font-family:Liberation Mono;letter-spacing:-0.9px;">DRAWN BY</div>
<div class="t" style="left:1669px;top:972px;font-size:5.5px;font-weight:bold;color:#ff2020;font-family:Liberation Mono;letter-spacing:-0.9px;">CHECKED BY</div>
<div class="t" style="left:1623px;top:983px;font-size:5.5px;font-weight:bold;color:#ff2020;font-family:Liberation Mono;letter-spacing:-0.9px;">JOB NO</div>
<div class="t" style="left:1669px;top:983px;font-size:5.5px;font-weight:bold;color:#ff2020;font-family:Liberation Mono;letter-spacing:-0.9px;">ISSUED ON</div>
<div class="t" style="left:1623px;top:994px;font-size:5.5px;font-weight:bold;color:#ff2020;font-family:Liberation Mono;letter-spacing:-0.9px;">SCALE</div>
<div class="t" style="left:1669px;top:994px;font-size:5.5px;font-weight:bold;color:#ff2020;font-family:Liberation Mono;letter-spacing:-0.9px;">DATE</div>
<div class="t" style="left:1635px;top:998px;font-size:7px;color:#ff2020;font-family:Liberation Mono;letter-spacing:-0.9px">No Scale</div>
<div class="t" style="left:1623px;top:1006px;font-size:5.5px;font-weight:bold;color:#ff2020;font-family:Liberation Mono;letter-spacing:-0.9px;">DWG NO</div>
<div class="t" style="left:1623px;top:1029px;font-size:5.5px;font-weight:bold;color:#ff2020;font-family:Liberation Mono;letter-spacing:-0.9px;">SHEET NO</div>
<div class="t" style="left:1659px;top:1033px;font-size:11px;font-style:italic;font-weight:bold;color:#ff2020;font-family:Liberation Serif">OF</div>
<div class="t" style="left:1612px;top:1012px;font-size:5px;font-weight:bold;color:#ff2020;font-family:Liberation Mono;letter-spacing:-1.1px;transform:rotate(-90deg);transform-origin:0 0">CAD FILE NAME</div>
<div class="t" style="left:1640px;top:823px;font-size:53px;font-family:Liberation Serif;color:transparent;-webkit-text-stroke:1.5px #eeeeee;transform:rotate(-90deg) scaleX(0.955);transform-origin:0 0">Autodesk</div>
<div class="a" style="left:1659px;top:624px;width:4px;height:4px;border-radius:50%;background:#e8e8e8"></div>
<svg class="a" style="left:1770px;top:205px" width="136" height="190" viewBox="1770 205 136 190">
 <circle cx="1837" cy="279" r="52.5" fill="none" stroke="#464c54" stroke-width="12.5"/>
 <rect x="1811.5" y="253.5" width="51" height="51" fill="#c5c6c8"/>
 <rect x="1822" y="264" width="30" height="30" fill="#b8babd"/>
 <text x="1837" y="284" font-size="12" font-weight="bold" text-anchor="middle" fill="#4a4e55" font-family="Liberation Sans" transform="translate(1837 0) scale(0.85 1) translate(-1837 0)">TOP</text>
 <g font-size="20.5" font-weight="bold" fill="#c4c8ce" text-anchor="middle" font-family="Liberation Sans">
  <text x="1836.5" y="230.5">N</text><text x="1836.5" y="343.5">S</text><text x="1781" y="287">W</text><text x="1894" y="287">E</text>
 </g>
 <rect x="1813.5" y="366.5" width="47" height="17" rx="3" fill="#9da1a7"/>
 <text x="1829" y="379" font-size="11" fill="#50545a" text-anchor="middle" font-family="Liberation Sans">WCS</text>
 <path d="M1847 373h8l-4 4z" fill="none" stroke="#6a6e74" stroke-width="1"/>
</svg>
<div class="a" style="left:1528px;top:991px;width:60px;height:15px;background:#54585c;border-radius:2px"></div>
<div class="a" style="left:1528px;top:1007px;width:60px;height:15px;background:#54585c;border-radius:2px"></div>
<div class="t" style="left:1530px;top:993px;font-size:11.5px;color:#e6e6e6;font-family:Liberation Mono">Command:</div>
<div class="t" style="left:1530px;top:1009px;font-size:11.5px;color:#e6e6e6;font-family:Liberation Mono">Command:</div>
<div class="a" style="left:601px;top:1023px;width:54px;height:26px;background:linear-gradient(#5a5e62,#3e4246);border-radius:3px 0 0 0"></div>
<div class="a" style="left:605px;top:1027px;width:4px;height:18px;background:repeating-linear-gradient(#999 0 2px,transparent 2px 3px);opacity:0.7"></div>
<svg class="a" style="left:612px;top:1028px" width="40" height="16" viewBox="0 0 40 16"><path d="M4 4l7 7M11 4l-7 7" stroke="#eee" stroke-width="1.8"/><path d="M29 8l8 7" stroke="#eee" stroke-width="2.4" stroke-linecap="round"/><path d="M31.5 4.5a3.2 3.2 0 1 0 -0.5 4.5" stroke="#eee" stroke-width="2" fill="none"/></svg>
<div class="a" style="left:655px;top:1023px;width:935px;height:26px;background:#c3c5c7"></div>
<div class="a" style="left:659px;top:1029px;width:15px;height:14px;border:1px solid #8a8a8a;background:#b5b7b9"></div>
<svg class="a" style="left:660px;top:1030px" width="24" height="12" viewBox="0 0 24 12"><path d="M3 3l4 3-4 3M7 10h5" stroke="#333" stroke-width="1.2" fill="none"/><path d="M18 4h5l-2.5 3z" fill="#777"/></svg>
<svg class="a" style="left:1576px;top:1033px" width="10" height="6"><path d="M0 6L5 0L10 6Z" fill="#111"/></svg>
<!-- ===== DIALOG ===== -->
<div id="dlg" class="a" style="left:460px;top:230px;width:1000px;height:620px;z-index:20">
 <div class="a" style="left:0;top:0;width:1000px;height:620px;border-radius:7px 7px 5px 5px;background:#2e3135;border:1px solid #d8dadc;box-shadow:0 0 6px 2px rgba(0,0,0,0.55)"></div>
 <div class="a" style="left:1px;top:1px;width:998px;height:27px;border-radius:6px 6px 0 0;background:linear-gradient(90deg,#8d8f91 0,#5a5d60 90px,#3a3d41 150px,#34373b 300px,#303337 800px,#45484c 880px,#7c7f82 940px,#909396 998px)"></div>
 <div class="a" style="left:1px;top:1px;width:300px;height:26px;overflow:hidden;border-radius:6px 0 0 0"><div class="a" style="left:4px;top:6px;width:102px;height:15px;background:rgba(215,217,219,0.85);border-radius:7px;filter:blur(5px)"></div></div>
 <div class="a" style="left:112px;top:8px;width:210px;height:22px;border:2px solid rgba(120,124,128,0.35);border-bottom:none;border-left:none;border-radius:0 6px 0 0;filter:blur(1.5px)"></div>
 <div class="a" style="left:1px;top:28px;width:6px;height:591px;background:#2e3135"></div>
 <div class="a" style="left:993px;top:28px;width:6px;height:585px;background:linear-gradient(90deg,#5a5d60,#8a9299 3px,#a0a8ae)"></div>
 <div class="a" style="left:1px;top:612px;width:998px;height:7px;border-radius:0 0 5px 5px;background:linear-gradient(90deg,#2a2d30,#55585b 60px,#2a2d30 120px,#2a2d30 560px,#4a5256 600px,#2a2d30 650px,#2a2d30 880px,#4a5458 920px,#2a2d30 960px,#3a3d40)"></div>
 <div class="t" style="left:7px;top:8px;font-size:12px;color:#141414;letter-spacing:-0.2px">Schematic Reports</div>
 <!-- close -->
 <div class="a" style="left:947px;top:0;width:47px;height:19px;border:1px solid #3b1a14;border-top:none;border-radius:0 0 4px 4px;background:linear-gradient(#e9a898,#d87a66 45%,#c8361e 50%,#d0452c 80%,#e07a60)"></div>
 <svg class="a" style="left:964px;top:3px" width="14" height="13" viewBox="0 0 14 13"><path d="M2 1.5L12 11.5M12 1.5L2 11.5" stroke="#333" stroke-width="4.5"/><path d="M2 1.5L12 11.5M12 1.5L2 11.5" stroke="#fff" stroke-width="3"/></svg>
 <!-- client -->
 <div class="a" style="left:6px;top:27px;width:988px;height:586px;background:#f0f0f0;border:1px solid #1c1e20;outline:1px solid #cfd3d6"></div>
</div>
<div id="cl" class="a" style="left:467px;top:258px;width:986px;height:585px;z-index:21;font-size:11px;letter-spacing:-0.2px;color:#000">
 <!-- listbox -->
 <div class="t" style="left:8px;top:11px">Report Name</div>
 <div class="a" style="left:8px;top:23px;width:244px;height:248px;background:#fff;border:1px solid #e6e6e6"></div>
 <div class="a" style="left:9px;top:24px;width:243px;height:13px;background:#3399ff"></div>
 <div class="a" style="left:11px;top:25px;line-height:13px;white-space:nowrap">
  <div style="color:#fff">Bill of Material</div>
  <div>Missing Bill of Material</div><div>Component</div><div>From/To</div><div>Component Wire List</div><div>Connector Plug</div><div>PLC I/O Address and Descriptions</div><div>PLC I/O Component Connection</div><div>PLC Modules Used So Far</div><div>Terminal Numbers</div><div>Terminal Plan</div><div>Connector Summary</div><div>Connector Detail</div><div>Cable Summary</div><div>Cable From/To</div><div>Wire Label</div>
 </div>
 <!-- groupboxes -->
 <div class="gb" style="left:283px;top:14px;width:700px;height:567px"></div>
 <div class="gl" style="left:289px;top:8px">Bill of Material</div>
 <div class="rb on" style="left:287px;top:29px"></div><div class="t" style="left:303px;top:31px">Project</div>
 <div class="rb" style="left:287px;top:54px"></div><div class="t" style="left:303px;top:56px">Active drawing</div>
 <div class="t" style="left:287px;top:87px">Category:</div>
 <div class="a" style="left:339px;top:84px;width:214px;height:21px;border:1px solid #707070;border-radius:3px;background:linear-gradient(#f2f2f2,#ebebeb 50%,#dddddd 51%,#cfcfcf)"></div>
 <div class="t" style="left:343px;top:90px">Schematic</div>
 <svg class="a" style="left:540px;top:92px" width="8" height="5"><path d="M0 0H8L4 4Z" fill="#000"/></svg>

 <div class="gb" style="left:288px;top:134px;width:411px;height:118px"></div>
 <div class="gl" style="left:294px;top:128px">Include options</div>
 <div class="cb dis" style="left:297px;top:150px"></div><div class="t" style="left:312px;top:151px;color:#8d8d8d">Include Inventor Parts</div>
 <div class="cb on" style="left:297px;top:171px"><svg width="11" height="11" style="position:absolute;left:0;top:0"><path d="M2.5 5.5l2.5 3.2 4-7.2" stroke="#2b3f9e" stroke-width="1.7" fill="none"/></svg></div><div class="t" style="left:312px;top:172px">All of the below</div>
 <div class="cb on" style="left:318px;top:192px"><svg width="11" height="11" style="position:absolute;left:0;top:0"><path d="M2.5 5.5l2.5 3.2 4-7.2" stroke="#2b3f9e" stroke-width="1.7" fill="none"/></svg></div><div class="t" style="left:334px;top:193px">Include Cables</div>
 <div class="cb on" style="left:318px;top:213px"><svg width="11" height="11" style="position:absolute;left:0;top:0"><path d="M2.5 5.5l2.5 3.2 4-7.2" stroke="#2b3f9e" stroke-width="1.7" fill="none"/></svg></div><div class="t" style="left:334px;top:214px">Include Connectors</div>
 <div class="cb on" style="left:318px;top:234px"><svg width="11" height="11" style="position:absolute;left:0;top:0"><path d="M2.5 5.5l2.5 3.2 4-7.2" stroke="#2b3f9e" stroke-width="1.7" fill="none"/></svg></div><div class="t" style="left:334px;top:235px">Include Jumpers</div>

 <div class="gb" style="left:288px;top:278px;width:411px;height:34px"></div>
 <div class="gl" style="left:294px;top:272px">Options</div>
 <div class="cb" style="left:296px;top:293px"></div><div class="t" style="left:312px;top:294px">List terminal numbers</div>

 <div class="gb" style="left:288px;top:344px;width:411px;height:113px"></div>
 <div class="gl" style="left:294px;top:338px">Display option</div>
 <div class="rb on" style="left:296px;top:363px"></div><div class="t" style="left:312px;top:364px">Normal Tallied Format</div>
 <div class="rb" style="left:296px;top:388px"></div><div class="t" style="left:312px;top:389px">Normal Tallied Format (Group by Installation/Location)</div>
 <div class="rb" style="left:296px;top:413px"></div><div class="t" style="left:312px;top:414px">Display in Tallied Purchase List Format</div>
 <div class="rb" style="left:296px;top:438px"></div><div class="t" style="left:312px;top:439px">Display in "By TAG" Format</div>

 <div class="cb on" style="left:287px;top:483px"><svg width="11" height="11" style="position:absolute;left:0;top:0"><path d="M2.5 5.5l2.5 3.2 4-7.2" stroke="#2b3f9e" stroke-width="1.7" fill="none"/></svg></div><div class="t" style="left:303px;top:484px">Freshen Project Database</div>
 <div class="btn" style="left:288px;top:505px;width:52px;height:20px">Format</div>
 <div class="btn def" style="left:520px;top:546px;width:54px;height:20px">OK</div>
 <div class="btn" style="left:606px;top:546px;width:54px;height:20px">Cancel</div>
 <div class="btn" style="left:692px;top:546px;width:54px;height:20px">Help</div>

 <div class="gb" style="left:720px;top:32px;width:253px;height:169px"></div>
 <div class="gl" style="left:726px;top:26px">Installation Codes to extract:</div>
 <div class="rb on" style="left:727px;top:51px"></div><div class="t" style="left:744px;top:52px">All</div>
 <div class="rb" style="left:727px;top:76px"></div><div class="t" style="left:744px;top:77px">Blank</div>
 <div class="rb" style="left:727px;top:101px"></div><div class="t" style="left:744px;top:102px">Named Installation</div>
 <div class="t" style="left:728px;top:129px;color:#8d8d8d">Installation</div>
 <div class="a" style="left:785px;top:124px;width:126px;height:19px;border:1px solid #6f6f6f;background:#f0f0f0"></div>
 <div class="btn dis" style="left:758px;top:148px;width:59px;height:20px">Drawing</div>
 <div class="t" style="left:728px;top:167px;color:#8d8d8d">List:</div>
 <div class="btn dis" style="left:758px;top:176px;width:59px;height:20px">Project</div>

 <div class="gb" style="left:720px;top:214px;width:253px;height:169px"></div>
 <div class="gl" style="left:726px;top:208px">Location Codes to extract:</div>
 <div class="rb on" style="left:727px;top:233px"></div><div class="t" style="left:744px;top:234px">All</div>
 <div class="rb" style="left:727px;top:258px"></div><div class="t" style="left:744px;top:259px">Blank</div>
 <div class="rb" style="left:727px;top:283px"></div><div class="t" style="left:744px;top:284px">Named Location</div>
 <div class="t" style="left:728px;top:311px;color:#8d8d8d">Location</div>
 <div class="a" style="left:776px;top:306px;width:126px;height:19px;border:1px solid #6f6f6f;background:#f0f0f0"></div>
 <div class="btn dis" style="left:758px;top:330px;width:59px;height:20px">Drawing</div>
 <div class="t" style="left:728px;top:349px;color:#8d8d8d">List:</div>
 <div class="btn dis" style="left:758px;top:358px;width:59px;height:20px">Project</div>
</div>

<!-- ===== STATUS BAR ===== -->
<div id="status" class="a"></div>
<div class="a" style="left:0;top:1049px;width:1920px;height:1px;background:#333"></div>
<div class="a" style="left:0;top:1079px;width:35px;height:1px;background:#000"></div><div class="a" style="left:35px;top:1079px;width:8px;height:1px;background:#fff"></div>
<div class="sbx" style="left:1307px;width:48px"></div>
<div class="sbx" style="left:1357px;width:64px"></div>
<div class="sbx" style="left:1423px;width:103px"></div>
<div class="sbx" style="left:1527px;width:63px"></div>
<div class="sbx" style="left:1591px;width:112px"></div>
<div class="sbx" style="left:1704px;width:66px"></div>
<div class="sbx" style="left:1745px;width:25px"></div>
<div class="sbx" style="left:1771px;width:25px"></div>
<div class="sbx" style="left:1797px;width:27px"></div>
<div class="sbx" style="left:1825px;width:43px"></div>
<div class="sbx" style="left:1869px;width:50px"></div>
<div class="t" style="left:1311px;top:1057px;font-size:13px;color:#f2f2f2;letter-spacing:-0.6px">MODEL</div>
<div class="t" style="left:1669px;top:1057px;font-size:13px;color:#f2f2f2;letter-spacing:-0.3px">1:1</div>
<svg class="a" style="left:1357px;top:1050px" width="563" height="30" viewBox="1357 1050 563 30">
 <g fill="#cfcfcf">
  <path d="M1363 1056v16M1366 1056v16M1369 1056v16M1372 1056v16M1375 1056v16" stroke="#cfcfcf" stroke-width="1" stroke-dasharray="1.2 1.2"/>
 </g>
 <g fill="#bdbdbd"><pattern id="dots" width="3" height="3" patternUnits="userSpaceOnUse" x="1386" y="1057"><rect width="1.2" height="1.2" fill="#c8c8c8"/></pattern><rect x="1386" y="1057" width="14" height="14" fill="url(#dots)"/></g>
 <path d="M1409 1061h8l-4 4z" fill="#f0f0f0"/>
 <path d="M1430.5 1058v13h13M1430.5 1065h4v6" stroke="#e0e0e0" stroke-width="1.2" fill="none"/>
 <circle cx="1459.5" cy="1064" r="6.5" fill="none" stroke="#2a86e8" stroke-width="2"/><path d="M1459.5 1064l6-2.5M1459.5 1064h7" stroke="#2a86e8" stroke-width="1.5"/>
 <path d="M1475 1061h8l-4 4z" fill="#f0f0f0"/>
 <path d="M1491 1055l16 17M1500 1055v18" stroke="#a8a8a8" stroke-width="1.2"/>
 <path d="M1515 1061h8l-4 4z" fill="#f0f0f0"/>
 <path d="M1531 1071h15M1533 1070l12-9" stroke="#2a86e8" stroke-width="1.6"/><circle cx="1537" cy="1067" r="1.5" fill="#2a86e8"/>
 <rect x="1557.5" y="1057.5" width="13" height="13" fill="none" stroke="#e0e0e0" stroke-width="1.2"/><rect x="1556" y="1056" width="3.5" height="3.5" fill="#1ec81e"/>
 <path d="M1578 1061h8l-4 4z" fill="#f0f0f0"/>
 <path d="M1597 1073l6-16 6 16-6-4z" fill="#2a86e8"/><circle cx="1608" cy="1060" r="3" fill="none" stroke="#2a86e8" stroke-width="1.5"/>
 <path d="M1622 1073l6-16 6 16-6-4z" fill="#c0c0c0"/><path d="M1631 1056l-2 4h3l-2 4" stroke="#c0c0c0" stroke-width="1.2" fill="none"/>
 <path d="M1646 1073l6-16 6 16-6-4z" fill="#c0c0c0"/>
 <path d="M1695 1061h8l-4 4z" fill="#f0f0f0"/>
 <path d="M1723.5 1064.0 L1720.8 1066.0 L1721.3 1069.3 L1718.0 1068.8 L1716.0 1071.5 L1714.0 1068.8 L1710.7 1069.3 L1711.2 1066.0 L1708.5 1064.0 L1711.2 1062.0 L1710.7 1058.7 L1714.0 1059.2 L1716.0 1056.5 L1718.0 1059.2 L1721.3 1058.7 L1720.8 1062.0Z" fill="#a8a8a8" stroke="#a8a8a8" stroke-width="1.5" stroke-linejoin="round"/><circle cx="1716" cy="1064" r="5.5" fill="#a8a8a8"/><circle cx="1716" cy="1064" r="2.2" fill="#3e3e3e"/>
 <path d="M1734 1061h8l-4 4z" fill="#f0f0f0"/>
 <path d="M1757 1057v14M1750 1064h14" stroke="#d0d0d0" stroke-width="1.6"/>
 <rect x="1776.5" y="1056.5" width="7" height="7" fill="none" stroke="#ccc"/><circle cx="1789" cy="1062" r="3" fill="none" stroke="#ccc"/><path d="M1779 1072l4-6 4 6z" fill="none" stroke="#ccc"/>
 <circle cx="1810.5" cy="1064" r="7.5" fill="#1b5fd0" stroke="#3a8ef0" stroke-width="1"/><path d="M1808 1066l4-3" stroke="#7ab8ff" stroke-width="1"/>
 <rect x="1829" y="1056" width="15" height="16" fill="#2d72c8"/><path d="M1831 1064l4 4 9-9" stroke="#36c836" stroke-width="2.5" fill="none"/>
 <rect x="1849" y="1060" width="12" height="10" fill="#e8c840"/><circle cx="1851" cy="1058" r="2" fill="none" stroke="#ddd"/><path d="M1855 1068l3 3 5-6" stroke="#36c836" stroke-width="1.8" fill="none"/>
 <rect x="1874.5" y="1058.5" width="15" height="11" fill="none" stroke="#d0d0d0" stroke-width="1.2"/><path d="M1878 1067l4-4M1886 1061l-3 3" stroke="#d0d0d0" stroke-width="1.2"/>
 <path d="M1898 1058h13M1898 1064h13M1898 1070h13" stroke="#e0e0e0" stroke-width="2"/>
</svg>

</body></html>
